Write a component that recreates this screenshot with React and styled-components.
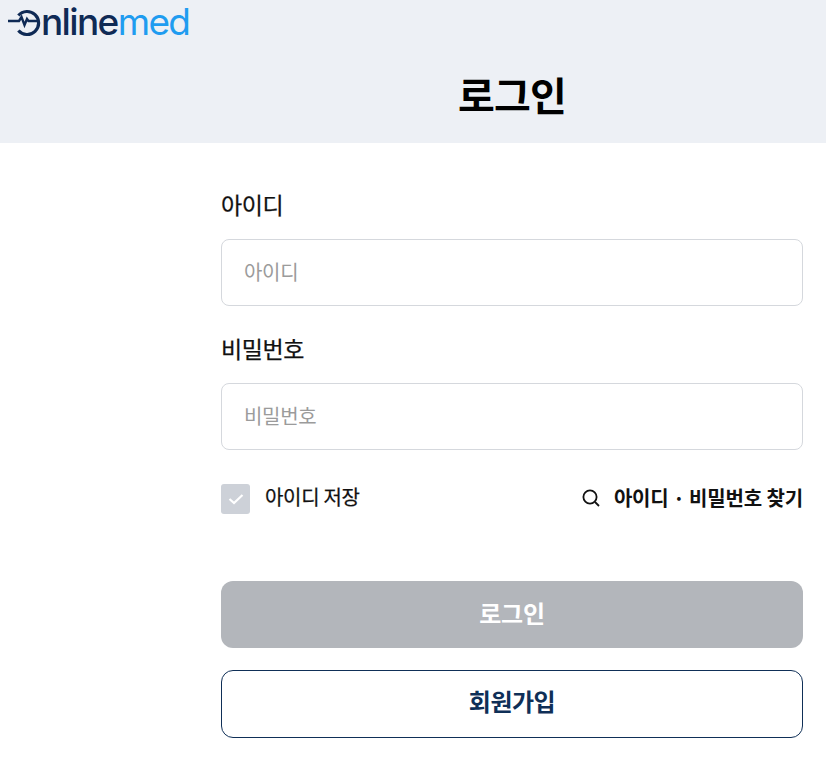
import React from "react";
import styled, { createGlobalStyle } from "styled-components";

const Global = createGlobalStyle`
  html, body { margin: 0; padding: 0; background: #fff; }
  body { font-family: "Noto Sans CJK KR", "Noto Sans", sans-serif; color: #111; }
  * { box-sizing: border-box; }
`;
const Page = styled.div`width: 826px; height: 760px; overflow: hidden;`;
const Header = styled.header`height: 143px; background: #edf0f5; display: flex; flex-direction: column;`;
const Logo = styled.div`
  height: 69px; padding: 4px 0 0 8px; display: flex; align-items: flex-start;
`;
const LogoText = styled.span`
  font-family: Inter, "Liberation Sans", sans-serif; font-size: 37px; line-height: 36px; letter-spacing: -1.65px;
  font-weight: 500; color: #0f2a55;
`;
const LogoAccent = styled.span`color: #1f9cf0; font-weight: 400;`;
const TitleRow = styled.div`padding-left: 221px; width: 803px;`;
const Title = styled.h1`
  margin: 0; text-align: center; font-size: 40px; line-height: 50px; font-weight: 700; color: #000; letter-spacing: -0.8px;
`;
const Form = styled.form`
  width: 582px; margin-left: 221px; padding-top: 43px; display: flex; flex-direction: column;
`;
const Label = styled.label`
  font-size: 23px; line-height: 37px; height: 37px; font-weight: 400; color: #111; letter-spacing: -0.4px; margin-bottom: 16px;
  -webkit-text-stroke: 0.25px #111;
  display: block; margin-top: ${p => p.$top || 0}px;
`;
const Input = styled.input`
  width: 100%; height: 67px; border: 1px solid #d5d8dd; border-radius: 8px; padding: 0 22px 2px; outline: none;
  font: 400 20px "Noto Sans CJK KR", sans-serif; letter-spacing: -0.3px; color: #111;
  &::placeholder { color: #9b9b9b; opacity: 1; }
`;
const OptionRow = styled.div`
  margin-top: 34px; height: 30px; display: flex; align-items: center; justify-content: space-between;
`;
const Remember = styled.div`display: flex; align-items: center; gap: 15px;`;
const CheckBox = styled.span`
  width: 29px; height: 30px; border-radius: 3px; background: #cdd1d8; display: flex; align-items: center; justify-content: center;
`;
const RememberText = styled.span`
  font-size: 20px; font-weight: 400; color: #111; letter-spacing: -0.3px; padding-bottom: 5px;
  -webkit-text-stroke: 0.25px #111;
`;
const FindLink = styled.a`
  display: flex; align-items: center; gap: 13px; font-size: 20px; font-weight: 700; color: #111; letter-spacing: -0.15px;
  padding-bottom: 3px;
`;
const PrimaryButton = styled.button`
  margin-top: 67px; height: 67px; width: 100%; border: 0; border-radius: 12px; background: #b3b6bb; color: #fff;
  font: 700 24px "Noto Sans CJK KR", sans-serif; letter-spacing: -0.3px; padding: 0 0 5px;
`;
const SecondaryButton = styled.button`
  margin-top: 22px; height: 68px; width: 100%; border: 1px solid #0f2f57; border-radius: 12px; background: #fff; color: #0f2f57;
  font: 700 24px "Noto Sans CJK KR", sans-serif; letter-spacing: -0.5px; padding: 0 0 7px;
`;

export default function App() {
  return (
    <Page>
      <Global />
      <Header>
        <Logo>
          <svg width="33" height="34" viewBox="0 0 33 34" fill="none" stroke="#0f2a55">
            <path d="M10.4 11.5A11.5 11.5 0 1 1 10.4 26.5" strokeWidth="3.2" />
            <path d="M0 17H11L13.5 13L16.5 21L19 15L20.5 17H30" strokeWidth="2.4" />
          </svg>
          <LogoText>nline<LogoAccent>med</LogoAccent></LogoText>
        </Logo>
        <TitleRow><Title>로그인</Title></TitleRow>
      </Header>
      <Form>
        <Label>아이디</Label>
        <Input placeholder="아이디" />
        <Label $top={24}>비밀번호</Label>
        <Input placeholder="비밀번호" />
        <OptionRow>
          <Remember>
            <CheckBox>
              <svg width="16" height="12" viewBox="0 0 16 12" fill="none" stroke="#fff" strokeWidth="2.2">
                <path d="M1.5 6L6 10L14.5 2" />
              </svg>
            </CheckBox>
            <RememberText>아이디 저장</RememberText>
          </Remember>
          <FindLink>
            <svg width="20" height="20" viewBox="0 0 20 20" fill="none" stroke="#111" strokeWidth="1.8">
              <circle cx="9" cy="9" r="6.6" />
              <path d="M14 14L18 18" />
            </svg>
            아이디 · 비밀번호 찾기
          </FindLink>
        </OptionRow>
        <PrimaryButton type="button">로그인</PrimaryButton>
        <SecondaryButton type="button">회원가입</SecondaryButton>
      </Form>
    </Page>
  );
}
